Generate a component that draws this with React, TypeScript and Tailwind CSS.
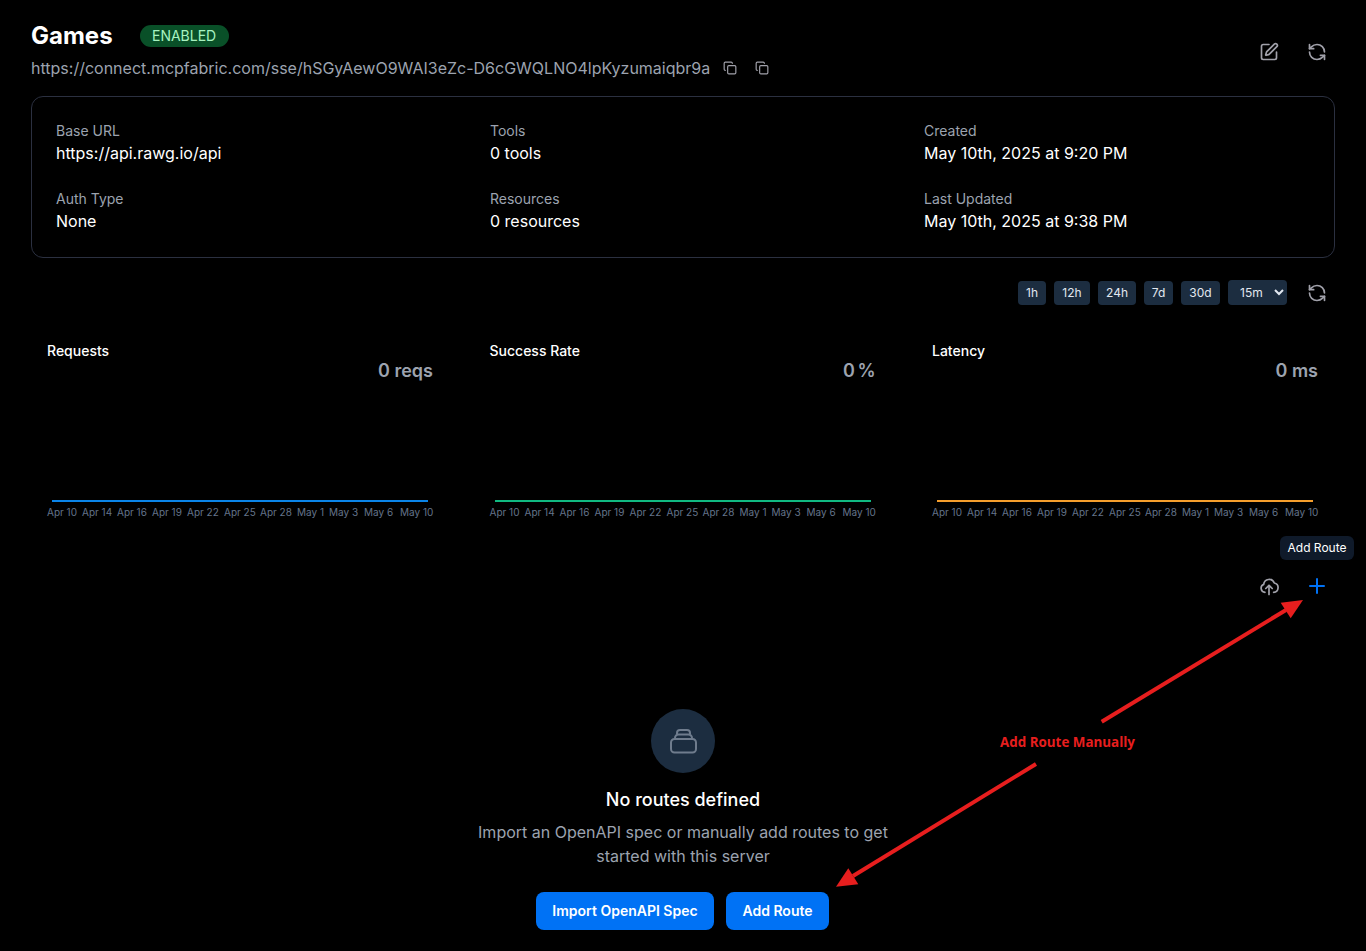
import { Copy, Plus, RefreshCcw, SquarePen } from "lucide-react";

const ticks = [
  { t: "Apr 10", w: "w-[35px]" },
  { t: "Apr 14", w: "w-[35px]" },
  { t: "Apr 16", w: "w-[35px]" },
  { t: "Apr 19", w: "w-[35px]" },
  { t: "Apr 22", w: "w-[37px]" },
  { t: "Apr 25", w: "w-[36px]" },
  { t: "Apr 28", w: "w-[37px]" },
  { t: "May 1", w: "w-[32px]" },
  { t: "May 3", w: "w-[35px]" },
  { t: "May 6", w: "w-[36px]" },
  { t: "May 10", w: "w-[33px]" },
];

const charts = [
  { title: "Requests", value: "0 reqs", line: "bg-[#0a84e8]", extra: "" },
  { title: "Success Rate", value: "0 %", line: "bg-[#10b981]", extra: "[word-spacing:-2px]" },
  { title: "Latency", value: "0 ms", line: "bg-[#f59e2c]", extra: "" },
];

const info = [
  ["Base URL", "https://api.rawg.io/api"],
  ["Tools", "0 tools"],
  ["Created", "May 10th, 2025 at 9:20 PM"],
  ["Auth Type", "None"],
  ["Resources", "0 resources"],
  ["Last Updated", "May 10th, 2025 at 9:38 PM"],
];

const ranges = [
  { r: "1h", w: "w-[28px]" },
  { r: "12h", w: "w-[36px]" },
  { r: "24h", w: "w-[38px]" },
  { r: "7d", w: "w-[29px]" },
  { r: "30d", w: "w-[39px]" },
];

function Chart({ title, value, line, extra }: { title: string; value: string; line: string; extra: string }) {
  return (
    <div className="w-[386px]">
      <div className="text-[14px] leading-[20px] font-medium text-white">{title}</div>
      <div className={`text-right text-[18px] leading-[20px] font-semibold text-[#9ca3af] ${extra}`}>{value}</div>
      <div className={`mt-[119px] mx-[5px] h-[2px] ${line}`} />
      <div className="mt-[3px] flex text-[10px] leading-[14px] whitespace-nowrap text-[#64748b]">
        {ticks.map((k) => (
          <span key={k.t} className={k.w}>
            {k.t}
          </span>
        ))}
      </div>
    </div>
  );
}

export default function App() {
  return (
    <div className="relative h-[951px] w-[1366px] overflow-hidden bg-black font-['Inter',sans-serif] text-white">
      <div className="px-[31px] pt-[20px]">
        <header className="flex items-start justify-between">
          <div>
            <div className="flex h-[30px] items-center gap-[27px]">
              <h1 className="pt-[1px] text-[24px] leading-[30px] font-bold">Games</h1>
              <span className="mt-[1px] flex h-[22px] w-[89px] items-center justify-center rounded-full bg-[#095028] text-[14px] text-[#a7f3c0]">
                ENABLED
              </span>
            </div>
            <div className="mt-[6px] flex h-[24px] items-center text-[16px] leading-[24px] text-[#9ca3af]">
              <span>https://connect.mcpfabric.com/sse/hSGyAewO9WAI3eZc-D6cGWQLNO4lpKyzumaiqbr9a</span>
              <span className="ml-[13px] flex gap-[18px] text-[#a1a1aa]">
                <Copy size={14} />
                <Copy size={14} />
              </span>
            </div>
          </div>
          <div className="mt-[22px] mr-[8px] flex gap-[28px] text-[#a1a1aa]">
            <SquarePen size={20} />
            <RefreshCcw size={20} />
          </div>
        </header>

        <section className="mt-[16px] grid grid-cols-[418px_418px_1fr] gap-x-[16px] gap-y-[24px] rounded-[12px] border border-[#2b3040] p-[24px]">
          {info.map(([label, value]) => (
            <div key={label}>
              <div className="text-[14px] leading-[20px] text-[#9ca3af]">{label}</div>
              <div className="text-[16px] leading-[24px] text-white">{value}</div>
            </div>
          ))}
        </section>

        <div className="mt-[22px] mr-[8px] flex h-[25px] items-center justify-end text-[12px] text-[#e2e8f0]">
          <div className="flex items-center gap-[8px]">
            {ranges.map((k) => (
              <button key={k.r} className={`h-[24px] rounded-[4px] bg-[#1c2d40] ${k.w}`}>
                {k.r}
              </button>
            ))}
            <select className="h-[25px] w-[59px] rounded-[4px] bg-[#1c2d40] pl-[8px] text-[12px]">
              <option>15m</option>
            </select>
          </div>
          <RefreshCcw size={20} className="ml-[20px] text-[#a1a1aa]" />
        </div>

        <div className="mt-[36px] ml-[16px] flex gap-[56.5px]">
          {charts.map((c) => (
            <Chart key={c.title} {...c} />
          ))}
        </div>

        <div className="mt-[55px] mr-[6px] flex h-[24px] items-center justify-end gap-[26px]">
          <svg width="20" height="20" viewBox="0 0 20 20" fill="none" stroke="#a1a1aa" strokeWidth="1.7" strokeLinecap="round" strokeLinejoin="round">
            <path d="M6 16.3A4.1 4.1 0 0 1 4.7 8.4 5.5 5.5 0 0 1 15.3 7 4.7 4.7 0 0 1 14.6 16.3" />
            <path d="M10 9.5V18.5" />
            <path d="M6.8 12.5L10 9.3l3.2 3.2" />
          </svg>
          <Plus size={24} className="text-[#0072f5]" />
        </div>

        <div className="mt-[111px] flex flex-col items-center">
          <div className="flex h-[64px] w-[64px] items-center justify-center rounded-full bg-[#1c2d40]">
            <svg width="32" height="32" viewBox="0 0 32 32" fill="none" stroke="#6f7c8d" strokeWidth="2">
              <rect x="4" y="14" width="25" height="13.5" rx="3.5" />
              <path d="M8 14v-1a3.5 3.5 0 0 1 3.5-3.5h10a3.5 3.5 0 0 1 3.5 3.5v1" />
              <path d="M10 9.5V8a3 3 0 0 1 3-3h7a3 3 0 0 1 3 3v1.5" />
            </svg>
          </div>
          <h2 className="mt-[15px] text-[18px] leading-[24px] font-medium">No routes defined</h2>
          <p className="mt-[8px] w-[448px] text-center text-[16px] leading-[24px] text-[#9ca3af]">
            Import an OpenAPI spec or manually add routes to get started with this server
          </p>
          <div className="mt-[24px] mr-[1px] flex gap-[12px]">
            <button className="h-[38px] w-[178px] rounded-[8px] bg-[#0072f5] pb-[1px] text-[14px] font-semibold">Import OpenAPI Spec</button>
            <button className="h-[38px] w-[103px] rounded-[8px] bg-[#0072f5] pb-[1px] text-[14px] font-semibold">Add Route</button>
          </div>
        </div>
      </div>

      <div className="absolute left-[1280px] top-[536px] flex h-[24px] w-[74px] items-center justify-center rounded-[6px] bg-[#0f1a2a] text-[12px] text-white">
        Add Route
      </div>

      <svg className="absolute inset-0" width="1366" height="951" fill="none">
        <path d="M1101.7 721.7L1286 610" stroke="#e71e1e" strokeWidth="4" />
        <path d="M1303 600L1280.7 602.7L1290.7 618.3Z" fill="#e71e1e" />
        <path d="M1036 764L853 876" stroke="#e71e1e" strokeWidth="4" />
        <path d="M836 886.7L848.3 868.3L858.3 884.3Z" fill="#e71e1e" />
      </svg>
      <div className="absolute left-[1000px] top-[733px] font-['Open_Sans',sans-serif] text-[13.4px] leading-[18px] font-bold text-[#e71e1e]">
        Add Route Manually
      </div>
    </div>
  );
}
